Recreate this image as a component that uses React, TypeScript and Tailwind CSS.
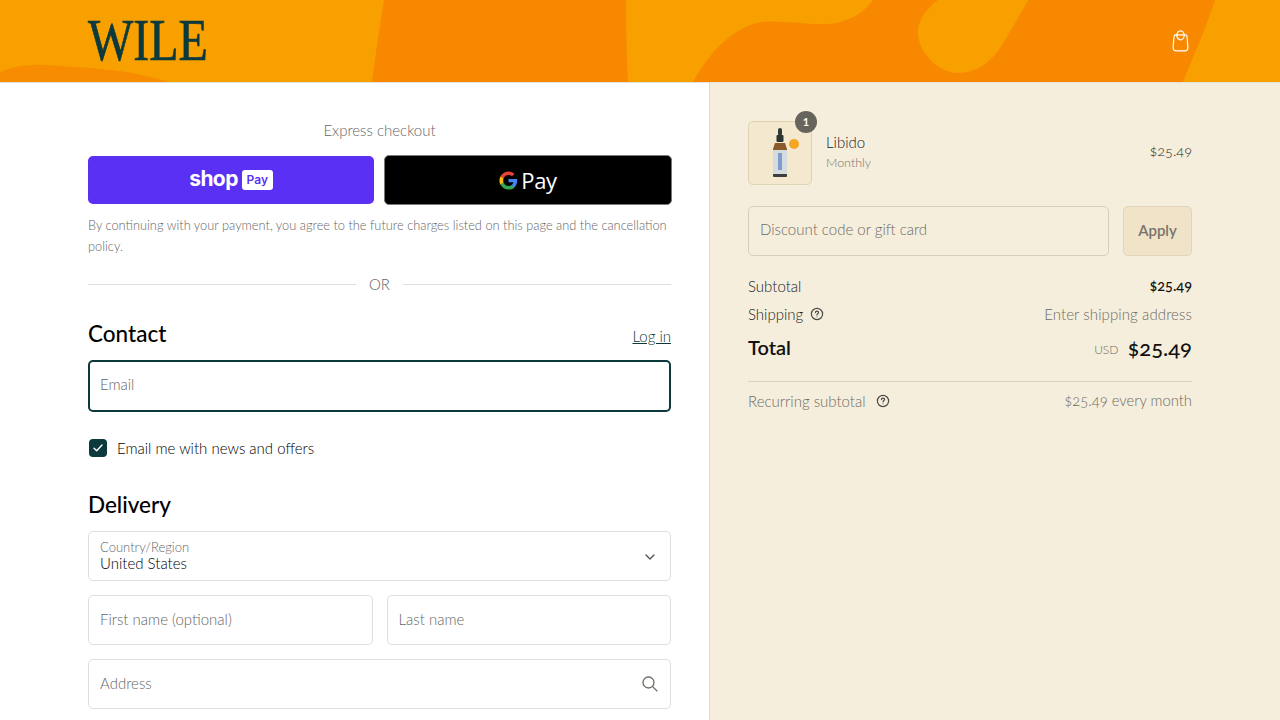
import React from "react";

const F = "font-['Lato','Open_Sans',sans-serif]";

function Banner() {
  return (
    <svg className="absolute inset-0 w-full h-full" viewBox="0 0 1280 82" preserveAspectRatio="none" aria-hidden="true">
      <rect width="1280" height="82" fill="#f8a000" />
      <path d="M0 72 C14 66 28 64 48 65 C85 68 125 68 168 82 L0 82 Z" fill="#f88c00" />
      <path d="M384 0 L626 0 C626 30 627 60 628 82 L372 82 C376 50 380 25 384 0 Z" fill="#f88800" />
      <path d="M873 0 C866 10 852 22 828 24 C805 25 785 20 762 22 C745 24 725 38 712 54 C704 64 698 72 693 82 L1183 82 C1196 50 1207 25 1215 0 Z" fill="#f88800" />
      <path d="M938 0 C925 10 917 22 918 34 C919 52 938 73 958 73 C978 73 992 60 1000 48 C1010 32 1020 15 1028 0 Z" fill="#f8a000" />
    </svg>
  );
}

function Field({ label, icon, className = "" }: { label: string; icon?: React.ReactNode; className?: string }) {
  return (
    <div className={`h-[50px] border border-[#dedede] rounded-[5px] bg-white flex items-center justify-between px-[11px] ${className}`}>
      <span className="text-[15px] leading-[20px] -mt-[2px] text-[#666]">{label}</span>
      {icon}
    </div>
  );
}

function Help() {
  return (
    <svg width="14" height="14" viewBox="0 0 14 14" fill="none" stroke="#4a4a44" strokeWidth="1.2">
      <circle cx="7" cy="7" r="5.600" />
      <path d="M5.400 5.600 C5.400 4.600 6.100 4.100 7 4.100 C7.900 4.100 8.600 4.700 8.600 5.500 C8.600 6.500 7 6.600 7 7.900" strokeLinecap="round" />
      <circle cx="7" cy="9.800" r="0.500" fill="#4a4a44" stroke="none" />
    </svg>
  );
}

const NUM = "[font-feature-settings:'onum']";

export default function App() {
  return (
    <div className={`${F} w-full h-[720px] overflow-hidden bg-white text-[#111] font-light`}>
      <header className="relative h-[83px] border-b border-[#e3e3e3] pl-[88px] pr-[91px] flex items-center justify-between">
        <Banner />
        <span className="relative inline-block origin-left scale-x-[0.8] font-['Liberation_Serif',serif] text-[60px] leading-[60px] font-normal text-[#0c3a3c] [-webkit-text-stroke:0.7px_#0c3a3c] -mt-[2px]">WILE</span>
        <svg width="17" height="22" viewBox="0 0 17 22" fill="none" stroke="#fff" strokeWidth="1.2" className="relative">
          <ellipse cx="8.500" cy="5.300" rx="3.700" ry="4.500" />
          <path d="M2 6.500 Q2 4.800 3.600 4.800 L13.400 4.800 Q15 4.800 15 6.500 L15.900 17 Q16.100 20.800 12.800 20.800 L4.200 20.800 Q.9 20.800 1.100 17 Z" />
        </svg>
      </header>

      <div className="flex h-[637px]">
        {/* Left column */}
        <main className="w-[710px] shrink-0 border-r border-[#dcdad2] pl-[88px] pr-[38px] pt-[37px]">
          <p className="text-center text-[15px] leading-[20px] text-[#666]">Express checkout</p>
          <div className="flex gap-[10px] mt-[16px] w-[584px]">
            <div className="w-[286px] h-[48px] rounded-[5px] bg-[#5a31f4] flex items-center justify-center gap-[4px]">
              <span className="font-['Inter',sans-serif] font-bold text-white text-[21px] leading-none tracking-[-0.6px] -mt-[3px]">shop</span>
              <span className="font-['Inter',sans-serif] font-semibold bg-white text-[#5a31f4] text-[12px] leading-[20px] w-[31px] h-[20px] text-center rounded-[3px]">Pay</span>
            </div>
            <div className="w-[288px] h-[50px] -mt-px rounded-[5px] bg-black border border-[#7a7a72] flex items-center justify-center gap-[3px]">
              <svg width="19" height="19" viewBox="0 0 48 48">
                <path fill="#4285F4" d="M46 24.500c0-1.600-.1-3.100-.4-4.500H24v8.600h12.400c-.5 2.900-2.100 5.300-4.600 6.900v5.800h7.400C43.500 36.300 46 31 46 24.500z" />
                <path fill="#34A853" d="M24 47c6.200 0 11.400-2 15.200-5.600l-7.400-5.800c-2.100 1.400-4.700 2.200-7.800 2.200-6 0-11-4-12.800-9.500H3.600v6C7.400 41.800 15.100 47 24 47z" />
                <path fill="#FBBC05" d="M11.200 28.300c-.5-1.400-.7-2.900-.7-4.300s.3-3 .7-4.300v-6H3.600C2 16.800 1 20.300 1 24s1 7.200 2.600 10.300l7.600-6z" />
                <path fill="#EA4335" d="M24 10.100c3.400 0 6.400 1.200 8.800 3.400l6.500-6.500C35.400 3.400 30.200 1 24 1 15.100 1 7.400 6.200 3.600 13.700l7.600 6C13 14.100 18 10.100 24 10.100z" />
              </svg>
              <span className="font-['Open_Sans',sans-serif] font-normal text-white text-[22px] leading-none tracking-[-0.3px]">Pay</span>
            </div>
          </div>
          <p className="mt-[10px] text-[12.8px] leading-[21px] text-[#666]">
            By continuing with your payment, you agree to the future charges listed on this page and the cancellation policy.
          </p>
          <div className="flex items-center mt-[17px] w-[583px]">
            <div className="flex-1 h-px bg-[#dedede]" />
            <span className="w-[47px] text-center text-[15px] leading-[20px] text-[#666]">OR</span>
            <div className="flex-1 h-px bg-[#dedede]" />
          </div>
          <div className="flex items-end justify-between mt-[25px] w-[583px]">
            <h2 className="text-[22.5px] leading-[30px] font-medium text-black">Contact</h2>
            <a className="text-[15px] leading-[20px] underline text-[#0c3a3c] mb-[3px]">Log in</a>
          </div>
          <div className="mt-[11px] w-[583px] h-[52px] border-2 border-[#0c3a3c] rounded-[5px] flex items-center px-[10px]">
            <span className="text-[15px] leading-[20px] -mt-[4px] text-[#666]">Email</span>
          </div>
          <div className="flex items-center mt-[26px] ml-px">
            <span className="w-[18px] h-[18px] rounded-[4px] bg-[#0c3a3c] flex items-center justify-center">
              <svg width="10" height="8" viewBox="0 0 10 8" fill="none" stroke="#fff" strokeWidth="1.4" strokeLinecap="round" strokeLinejoin="round">
                <path d="M1 4.200 L3.700 6.800 L9 1" />
              </svg>
            </span>
            <span className="ml-[10px] text-[15px] leading-[20px] text-[#000]">Email me with news and offers</span>
          </div>
          <h2 className="mt-[32px] text-[22.5px] leading-[30px] font-medium text-black">Delivery</h2>
          <div className="mt-[11px] w-[583px] flex flex-col gap-[14px]">
            <div className="h-[50px] border border-[#dedede] rounded-[5px] flex items-center justify-between pl-[11px] pr-[15px]">
              <div className="flex flex-col -mt-[3px]">
                <span className="text-[13px] leading-[16px] text-[#666]">Country/Region</span>
                <span className="text-[15px] leading-[16px] text-[#000]">United States</span>
              </div>
              <svg width="10" height="6" viewBox="0 0 10 6" fill="none" stroke="#555" strokeWidth="1.4" strokeLinecap="round" strokeLinejoin="round" className="mt-px">
                <path d="M1 1 L5 5 L9 1" />
              </svg>
            </div>
            <div className="grid grid-cols-2 gap-[14px]">
              <Field label="First name (optional)" />
              <Field label="Last name" />
            </div>
            <Field
              label="Address"
              className="pr-[12px]"
              icon={
                <svg width="16" height="16" viewBox="0 0 16 16" fill="none" stroke="#6a6a62" strokeWidth="1.3">
                  <circle cx="6.500" cy="6.500" r="5.500" />
                  <path d="M10.600 10.600 L15.300 15.300" />
                </svg>
              }
            />
          </div>
        </main>

        {/* Right column */}
        <aside className="flex-1 bg-[#f5eedd] pl-[38px] pr-[88px] pt-[38px]">
          <div className="flex items-center">
            <div className="relative w-[64px] h-[64px] rounded-[5px] border border-[#dfd3b6] bg-[#f4e8cf] flex items-center justify-center">
              <svg width="32" height="54" viewBox="0 0 32 54" className="ml-[14px]">
                <rect x="7" y="2" width="4" height="8" rx="2" fill="#2f3a38" />
                <rect x="5.500" y="9" width="7" height="7" rx="1" fill="#2b3533" />
                <path d="M4 17 L14 17 L16 23 L16 48 C16 50 15 51 13 51 L5 51 C3 51 2 50 2 48 L2 23 Z" fill="#8a5a2a" />
                <rect x="2" y="24" width="14" height="24" fill="#d6dbe0" />
                <rect x="7" y="27" width="4" height="17" fill="#7f9ccb" />
                <rect x="2" y="48" width="14" height="3" rx="1" fill="#3b3f3d" />
                <circle cx="23" cy="18" r="5" fill="#f5a623" />
              </svg>
              <span className="absolute -top-[11px] -right-[6px] w-[22px] h-[22px] rounded-full bg-[#66645c] text-white text-[11px] font-bold flex items-center justify-center">1</span>
            </div>
            <div className="ml-[14px] flex-1 -mt-[2px]">
              <p className="text-[15px] leading-[20px] text-[#222]">Libido</p>
              <p className="mt-[2px] text-[12.5px] leading-[18px] text-[#77746a]">Monthly</p>
            </div>
            <span className={`text-[14.5px] leading-[20px] -mt-[5px] text-[#222] ${NUM}`}>$25.49</span>
          </div>

          <div className="flex gap-[14px] mt-[21px]">
            <div className="flex-1 h-[50px] rounded-[5px] border border-[#d8cfb8] flex items-center px-[11px]">
              <span className="text-[15px] leading-[20px] -mt-[4px] text-[#6e6b62]">Discount code or gift card</span>
            </div>
            <div className="w-[69px] h-[50px] rounded-[5px] border border-[#e0d5bb] bg-[#f0e3c8] flex items-center justify-center">
              <span className="text-[15px] leading-[20px] -mt-[2px] font-semibold text-[#77746a]">Apply</span>
            </div>
          </div>

          <div className="flex justify-between items-center mt-[20px] h-[20px]">
            <span className="text-[15px] text-[#222]">Subtotal</span>
            <span className={`text-[14.5px] font-medium text-[#111] ${NUM}`}>$25.49</span>
          </div>
          <div className="flex justify-between items-center mt-[8px] h-[20px]">
            <span className="flex items-center gap-[7px] text-[15px] text-[#222]">Shipping <Help /></span>
            <span className="text-[15px] tracking-[0.1px] text-[#6e6b62]">Enter shipping address</span>
          </div>
          <div className="flex justify-between items-center mt-[9px] h-[28px]">
            <span className="text-[20px] font-semibold text-[#111]">Total</span>
            <span className="flex items-center gap-[9px]">
              <span className="text-[12px] text-[#6e6b62] mt-[6px]">USD</span>
              <span className={`text-[22px] font-medium text-[#111] ${NUM}`}>$25.49</span>
            </span>
          </div>
          <div className="h-px bg-[#dad2bd] mt-[20px]" />
          <div className="flex justify-between items-center mt-[9px] h-[20px]">
            <span className="flex items-center gap-[10px] text-[15px] text-[#6e6b62]">Recurring subtotal <Help /></span>
            <span className={`text-[14.8px] -mt-[1px] text-[#6e6b62] ${NUM}`}>$25.49 every month</span>
          </div>
        </aside>
      </div>
    </div>
  );
}
